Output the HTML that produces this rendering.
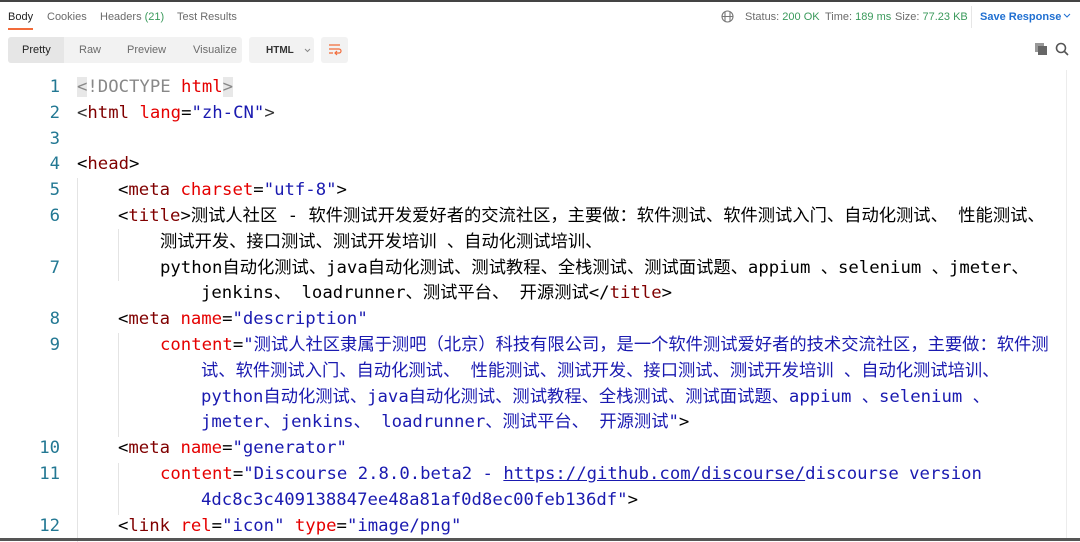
<!DOCTYPE html>
<html><head><meta charset="utf-8"><style>
*{margin:0;padding:0;box-sizing:border-box}
body{width:1080px;height:541px;overflow:hidden;background:#fff;font-family:"Liberation Sans",sans-serif;position:relative}
.t{position:absolute;font-size:11px;color:#6b6b6b;top:11px}
.code{position:absolute;left:0;top:74px;font-family:"DejaVu Sans Mono","Noto Sans CJK SC",monospace;font-size:17.3px;color:#000}
.r{position:absolute;height:26px;line-height:26px;white-space:pre}
.n{position:absolute;width:60px;text-align:right;color:#237893;height:26px;line-height:26px}
.p{color:#333}.g{color:#800000}.a{color:#e50000}.s{color:#1a1ab0}.d{color:#888}
u{text-decoration:underline}
.guide{position:absolute;width:1px;background:#e4e4e4}
</style></head><body>
<div style="position:absolute;left:0;top:0;width:1080px;height:2px;background:#444"></div>
<div class="t" style="left:8px;color:#222">Body</div>
<div style="position:absolute;left:8px;top:28px;width:25px;height:2px;background:#f26b3a"></div>
<div class="t" style="left:47px">Cookies</div>
<div class="t" style="left:100px">Headers <span style="color:#3a9a5b">(21)</span></div>
<div class="t" style="left:177px">Test Results</div>
<svg style="position:absolute;left:721px;top:10px" width="13" height="13" viewBox="0 0 13 13" fill="none" stroke="#777" stroke-width="1.1"><circle cx="6.5" cy="6.5" r="5.5"/><path d="M1 6.5h11M4 1.5v10M9 1.5v10"/></svg>
<div class="t" style="left:745px">Status: <span style="color:#3a9a5b">200 OK</span></div>
<div class="t" style="left:825px">Time: <span style="color:#3a9a5b">189 ms</span></div>
<div class="t" style="left:895px">Size: <span style="color:#3a9a5b">77.23 KB</span></div>
<div style="position:absolute;left:971px;top:6px;width:1px;height:22px;background:#e6e6e6"></div>
<div class="t" style="left:980px;color:#1f6fd1;font-weight:bold">Save Response</div>
<svg style="position:absolute;left:1063px;top:13px" width="8" height="6" viewBox="0 0 8 6" fill="none" stroke="#1f6fd1"><path d="M1 1l3 3 3-3"/></svg>
<div style="position:absolute;left:8px;top:37px;width:234px;height:26px;background:#f2f2f2;border-radius:3px"></div>
<div style="position:absolute;left:8px;top:37px;width:56px;height:26px;background:#e6e6e6;border-radius:3px 0 0 3px"></div>
<div class="t" style="left:22px;top:44px;color:#222">Pretty</div>
<div class="t" style="left:79px;top:44px">Raw</div>
<div class="t" style="left:127px;top:44px">Preview</div>
<div class="t" style="left:193px;top:44px">Visualize</div>
<div style="position:absolute;left:249px;top:37px;width:65px;height:26px;background:#f2f2f2;border-radius:3px"></div>
<div class="t" style="left:266px;top:45px;color:#333;font-weight:bold;font-size:10px">HTML</div>
<svg style="position:absolute;left:304px;top:48px" width="7" height="5" viewBox="0 0 7 5" fill="none" stroke="#888"><path d="M1 1l2.5 2.5L6 1"/></svg>
<div style="position:absolute;left:321px;top:37px;width:27px;height:26px;background:#f2f2f2;border-radius:3px"></div>
<svg style="position:absolute;left:327px;top:43px" width="15" height="14" viewBox="0 0 15 14" fill="none" stroke="#f26b3a" stroke-width="1.2"><path d="M2 2h11M2 6h10a2 2 0 0 1 0 4H8M10 8l-2 2 2 2M2 10h4"/></svg>
<svg style="position:absolute;left:1034px;top:42px" width="14" height="14" viewBox="0 0 14 14"><rect x="1" y="1" width="9" height="9" fill="#999"/><rect x="4" y="4" width="9" height="9" fill="#666"/></svg>
<svg style="position:absolute;left:1055px;top:42px" width="14" height="14" viewBox="0 0 14 14" fill="none" stroke="#555" stroke-width="1.6"><circle cx="6" cy="6" r="4.5"/><path d="M9.5 9.5l3.5 3.5"/></svg>
<div style="position:absolute;left:1066px;top:70px;width:1px;height:470px;background:#ececec"></div>
<div class="guide" style="left:77px;top:178px;height:364px"></div>
<div class="guide" style="left:118px;top:229px;height:52px"></div>
<div class="guide" style="left:118px;top:333px;height:104px"></div>
<div class="guide" style="left:118px;top:463px;height:52px"></div>
<div style="position:absolute;left:0;top:538px;width:1080px;height:3px;background:#555"></div>
<div class="code">
<div class="n" style="top:0">1</div><div class="r" style="left:77px;top:0"><span class="d" style="background:#e8e8e8">&lt;</span><span class="d">!DOCTYPE </span><span class="a">html</span><span class="d" style="background:#e8e8e8">&gt;</span></div>
<div class="n" style="top:25.8px">2</div><div class="r" style="left:77px;top:25.8px"><span class="p">&lt;</span><span class="g">html</span> <span class="a">lang</span>=<span class="s">"zh-CN"</span><span class="p">&gt;</span></div>
<div class="n" style="top:51.6px">3</div>
<div class="n" style="top:77.4px">4</div><div class="r" style="left:77px;top:77.4px">&lt;<span class="g">head</span>&gt;</div>
<div class="n" style="top:103.2px">5</div><div class="r" style="left:118px;top:103.2px">&lt;<span class="g">meta</span> <span class="a">charset</span>=<span class="s">"utf-8"</span>&gt;</div>
<div class="n" style="top:129px">6</div><div class="r" style="left:118px;top:129px">&lt;<span class="g">title</span>&gt;测试人社区 - 软件测试开发爱好者的交流社区，主要做：软件测试、软件测试入门、自动化测试、 性能测试、</div>
<div class="r" style="left:160px;top:154.8px">测试开发、接口测试、测试开发培训 、自动化测试培训、</div>
<div class="n" style="top:180.6px">7</div><div class="r" style="left:160px;top:180.6px">python自动化测试、java自动化测试、测试教程、全栈测试、测试面试题、appium 、selenium 、jmeter、</div>
<div class="r" style="left:201px;top:206.4px">jenkins、 loadrunner、测试平台、 开源测试&lt;/<span class="g">title</span>&gt;</div>
<div class="n" style="top:232.2px">8</div><div class="r" style="left:118px;top:232.2px">&lt;<span class="g">meta</span> <span class="a">name</span>=<span class="s">"description"</span></div>
<div class="n" style="top:258px">9</div><div class="r" style="left:160px;top:258px"><span class="a">content</span>=<span class="s">"测试人社区隶属于测吧（北京）科技有限公司，是一个软件测试爱好者的技术交流社区，主要做：软件测</span></div>
<div class="r s" style="left:201px;top:283.8px">试、软件测试入门、自动化测试、 性能测试、测试开发、接口测试、测试开发培训 、自动化测试培训、</div>
<div class="r s" style="left:201px;top:309.6px">python自动化测试、java自动化测试、测试教程、全栈测试、测试面试题、appium 、selenium 、</div>
<div class="r" style="left:201px;top:335.4px"><span class="s">jmeter、jenkins、 loadrunner、测试平台、 开源测试"</span>&gt;</div>
<div class="n" style="top:361.2px">10</div><div class="r" style="left:118px;top:361.2px">&lt;<span class="g">meta</span> <span class="a">name</span>=<span class="s">"generator"</span></div>
<div class="n" style="top:387px">11</div><div class="r" style="left:160px;top:387px"><span class="a">content</span>=<span class="s">"Discourse 2.8.0.beta2 - <u>https://github.com/discourse/</u>discourse version</span></div>
<div class="r" style="left:201px;top:412.8px"><span class="s">4dc8c3c409138847ee48a81af0d8ec00feb136df"</span>&gt;</div>
<div class="n" style="top:438.6px">12</div><div class="r" style="left:118px;top:438.6px">&lt;<span class="g">link</span> <span class="a">rel</span>=<span class="s">"icon"</span> <span class="a">type</span>=<span class="s">"image/png"</span></div>
</div>
</body></html>
